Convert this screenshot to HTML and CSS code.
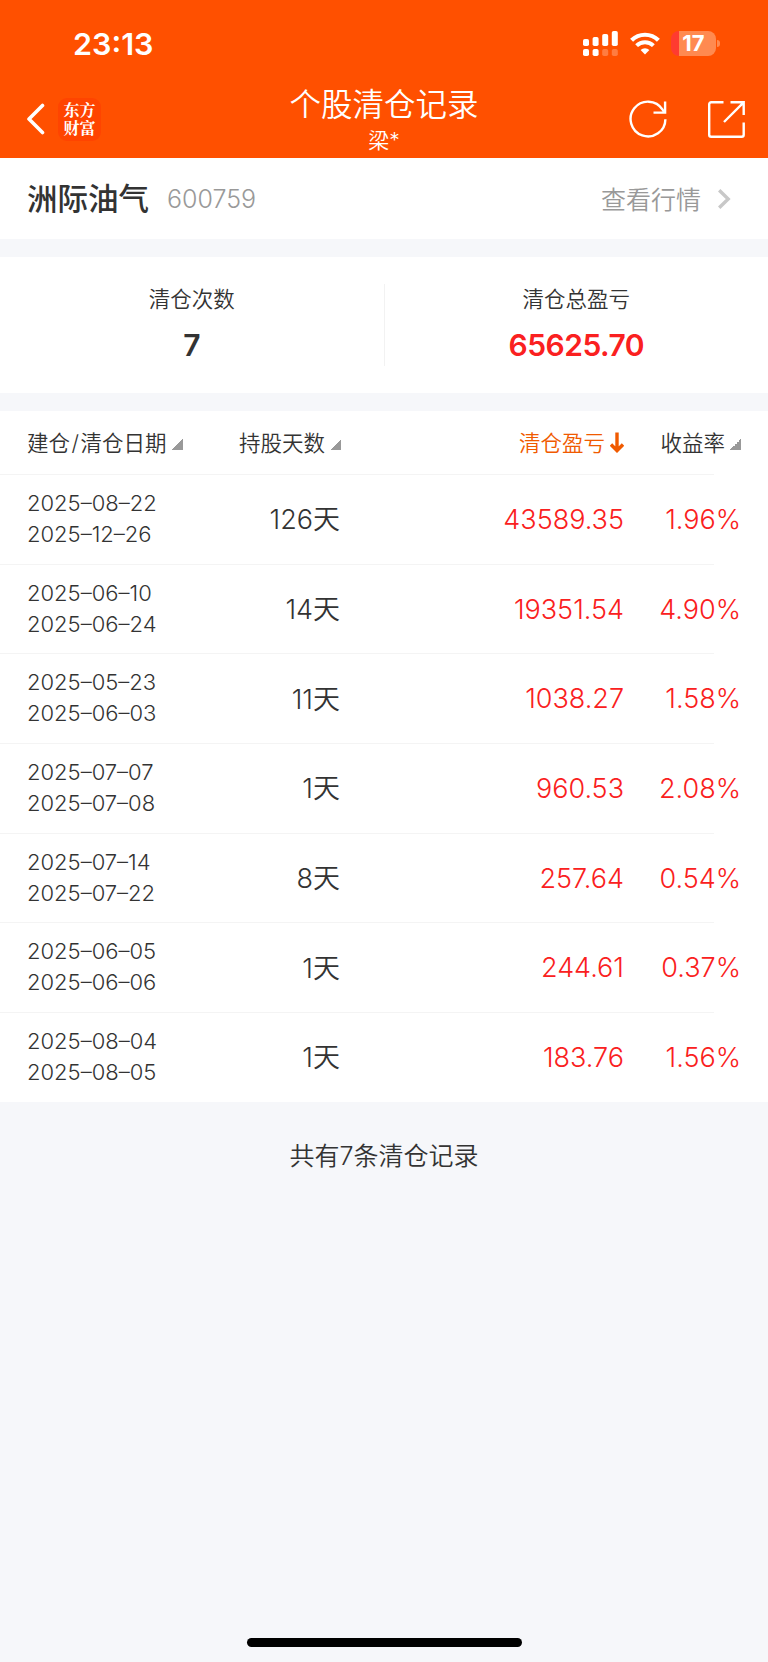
FILE: index.html
```html
<!DOCTYPE html>
<html lang="zh-CN">
<head>
    <meta charset="UTF-8">
    <meta name="viewport" content="width=device-width, initial-scale=1.0">
    <title>个股清仓记录</title>
    <link rel="stylesheet" href="styles.css">
</head>
<body>
    <header class="header">
        <div class="status-bar">
            <span class="time">23:13</span>
            <div class="status-icons">
                <svg class="signal" width="36" height="26" viewBox="0 0 36 26" fill="#fff">
                    <rect x="0" y="8" width="6" height="7" rx="1.8"/>
                    <rect x="9.6" y="6" width="6" height="9" rx="1.8"/>
                    <rect x="19.2" y="3" width="6" height="12" rx="1.8"/>
                    <rect x="28.8" y="0" width="6" height="15" rx="1.8"/>
                    <rect x="0" y="18" width="6" height="7" rx="1.8"/>
                    <rect x="9.6" y="18" width="6" height="7" rx="1.8"/>
                    <rect x="19.2" y="18" width="6" height="7" rx="1.8" opacity=".25"/>
                    <rect x="28.8" y="18" width="6" height="7" rx="1.8" opacity=".25"/>
                </svg>
                <svg class="wifi" width="30" height="23" viewBox="0 0 30 23" fill="none" stroke="#fff">
                    <path d="M1.6 8.3a19 19 0 0 1 26.8 0" stroke-width="4.2"/>
                    <path d="M6.6 13.6a12 12 0 0 1 16.8 0" stroke-width="4"/>
                    <path d="M15 22.4l-4.4-4.5a6.4 6.4 0 0 1 8.8 0z" fill="#fff" stroke="none"/>
                </svg>
                <div class="battery"><span>17</span></div>
            </div>
        </div>
        <div class="nav-bar">
            <div class="nav-left">
                <svg width="18" height="32" viewBox="0 0 18 32" fill="none" stroke="#fff" stroke-width="3.6" stroke-linecap="round" stroke-linejoin="round">
                    <path d="M15.5 2.5L2 16l13.5 13.5"/>
                </svg>
                <div class="logo">东方<br>财富</div>
            </div>
            <div class="nav-title">
                <h1>个股清仓记录</h1>
                <p>梁*</p>
            </div>
            <div class="nav-right">
                <svg width="38" height="38" viewBox="0 0 38 38" fill="none" stroke="#fff" stroke-width="2.4">
                    <path d="M36.4 19.2A17.4 17.4 0 1 1 33.6 9.6l2.2 3M24.5 12.6h11.6V1.5"/>
                </svg>
                <svg width="37" height="37" viewBox="0 0 37 37" fill="none" stroke="#fff" stroke-width="2.4">
                    <path d="M15.5 1.3H3.2a2 2 0 0 0-2 2v30.4a2 2 0 0 0 2 2h30.5a2 2 0 0 0 2-2V21.5M22.5 1.3h13.2V14M35.4 1.6L16 21"/>
                </svg>
            </div>
        </div>
    </header>

    <section class="stock">
        <h2>洲际油气</h2>
        <span class="code">600759</span>
        <a class="quote"><span>查看行情</span>
            <svg width="13" height="20" viewBox="0 0 13 20" fill="none" stroke="#c8c8c8" stroke-width="3.4">
                <path d="M1.2 1.2L10.2 10l-9 8.8"/>
            </svg>
        </a>
    </section>

    <section class="summary">
        <div class="summary-item">
            <p>清仓次数</p>
            <strong>7</strong>
        </div>
        <div class="summary-item">
            <p>清仓总盈亏</p>
            <strong class="red">65625.70</strong>
        </div>
    </section>

    <section class="records">
        <div class="row row-head">
            <div class="sort"><span>建仓<b>/</b>清仓日期</span><i></i></div>
            <div class="sort"><span>持股天数</span><i></i></div>
            <div class="sort active"><span>清仓盈亏</span>
                <svg width="14" height="21" viewBox="0 0 14 21" fill="none" stroke="#f05a00" stroke-width="3.4">
                    <path d="M7 .5v17.5M1 12.5l6 6 6-6"/>
                </svg>
            </div>
            <div class="sort"><span>收益率</span><i></i></div>
        </div>
        <div class="row">
            <div class="date">2025–08–22<br>2025–12–26</div>
            <div class="days">126天</div>
            <div class="num">43589.35</div>
            <div class="num">1.96%</div>
        </div>
        <div class="row">
            <div class="date">2025–06–10<br>2025–06–24</div>
            <div class="days">14天</div>
            <div class="num">19351.54</div>
            <div class="num">4.90%</div>
        </div>
        <div class="row">
            <div class="date">2025–05–23<br>2025–06–03</div>
            <div class="days">11天</div>
            <div class="num">1038.27</div>
            <div class="num">1.58%</div>
        </div>
        <div class="row">
            <div class="date">2025–07–07<br>2025–07–08</div>
            <div class="days">1天</div>
            <div class="num">960.53</div>
            <div class="num">2.08%</div>
        </div>
        <div class="row">
            <div class="date">2025–07–14<br>2025–07–22</div>
            <div class="days">8天</div>
            <div class="num">257.64</div>
            <div class="num">0.54%</div>
        </div>
        <div class="row">
            <div class="date">2025–06–05<br>2025–06–06</div>
            <div class="days">1天</div>
            <div class="num">244.61</div>
            <div class="num">0.37%</div>
        </div>
        <div class="row">
            <div class="date">2025–08–04<br>2025–08–05</div>
            <div class="days">1天</div>
            <div class="num">183.76</div>
            <div class="num">1.56%</div>
        </div>
    </section>

    <p class="total">共有7条清仓记录</p>
    <div class="home-bar"></div>
</body>
</html>
```
FILE: styles.css
```css
/* Global Styles */
* {
    box-sizing: border-box;
}

body {
    margin: 0;
    min-height: 1662px;
    display: flex;
    flex-direction: column;
    font-family: Inter, "Noto Sans CJK SC", sans-serif;
    font-weight: 350;
    color: #333;
    background: #f6f7fa;
}

h1, h2, p {
    margin: 0;
}

svg {
    display: block;
    flex: none;
}

/* Header */
.header {
    height: 158px;
    background: #ff5000;
    color: #fff;
}

.status-bar {
    height: 87px;
    padding: 0 49px 0 73px;
    display: flex;
    align-items: center;
    justify-content: space-between;
}

.time {
    font-size: 30.5px;
    font-weight: 600;
}

.status-icons {
    display: flex;
    align-items: center;
    gap: 11px;
}

.battery {
    position: relative;
    width: 45px;
    height: 25px;
    margin-right: 3px;
    border-radius: 8px;
    background: linear-gradient(90deg, #ff3b30 8px, #ff8a50 8px);
    font-size: 22px;
    font-weight: 700;
    line-height: 25px;
    text-align: center;
}

.battery::after {
    content: "";
    position: absolute;
    right: -4px;
    top: 9px;
    width: 3px;
    height: 7px;
    border-radius: 0 3px 3px 0;
    background: #ff8a50;
}

.nav-bar {
    height: 71px;
    display: grid;
    grid-template-columns: 1fr auto 1fr;
}

.nav-left {
    display: flex;
    align-items: center;
    gap: 13px;
    height: 64px;
    padding-left: 27px;
}

.logo {
    width: 43px;
    height: 43px;
    padding-top: 3px;
    border-radius: 9px;
    background: #ff4400;
    font-family: "Noto Serif CJK SC", "Noto Sans CJK SC", serif;
    font-size: 16px;
    font-weight: 700;
    line-height: 18px;
    text-align: center;
}

.nav-title {
    text-align: center;
}

.nav-title h1 {
    font-size: 31.5px;
    font-weight: 350;
    line-height: 35px;
}

.nav-title p {
    font-size: 21px;
    line-height: 38px;
}

.nav-right {
    display: flex;
    align-items: center;
    justify-content: flex-end;
    gap: 41px;
    height: 64px;
    padding-right: 23px;
}

/* Stock name */
.stock {
    height: 81px;
    padding: 0 37px 0 27px;
    display: flex;
    align-items: center;
    background: #fff;
}

.stock h2 {
    margin-top: -3px;
    font-size: 30.5px;
    font-weight: 500;
}

.code {
    margin-left: 18px;
    font-size: 25px;
    color: #999;
}

.quote {
    margin-left: auto;
    display: flex;
    align-items: center;
    gap: 17px;
    font-size: 25px;
    color: #999;
}

.quote span {
    margin-top: -2px;
}

/* Summary */
.summary {
    height: 136px;
    margin: 18px 0;
    padding: 27px 0;
    display: flex;
    background: #fff;
}

.summary-item {
    flex: 1;
    text-align: center;
}

.summary-item + .summary-item {
    border-left: 1px solid #f2f2f2;
}

.summary-item p {
    font-size: 21.5px;
    line-height: 30px;
}

.summary-item strong {
    display: block;
    font-size: 30px;
    font-weight: 600;
    letter-spacing: -0.5px;
    line-height: 36px;
    margin-top: 13px;
}

.summary-item .red {
    color: #fa2020;
}

/* Records */
.records {
    background: #fff;
}

.row {
    height: 89.7px;
    padding-left: 27px;
    display: grid;
    grid-template-columns: 163px 151px 283px 117px;
    align-items: center;
    background: linear-gradient(#f4f4f4, #f4f4f4) no-repeat 0 0 / 714px 1px;
}

.row-head {
    height: 63px;
    background: none;
}

.sort {
    display: flex;
    align-items: center;
    justify-content: flex-end;
    gap: 5px;
    font-size: 21.5px;
    white-space: nowrap;
}

.sort:first-child {
    justify-content: flex-start;
}

.sort span {
    margin-top: -3px;
}

.sort b {
    margin: 0 1.5px;
    font-weight: 350;
}

.sort i {
    width: 11px;
    height: 11px;
    margin-top: 4px;
    background: linear-gradient(135deg, transparent 50%, #999 50%);
}

.sort.active {
    color: #f05a00;
}

.sort.active svg {
    margin-top: -1px;
}

.date {
    font-size: 22px;
    line-height: 31px;
}

.days, .num {
    font-size: 27px;
    text-align: right;
}

.days {
    padding: 0 1px 2px 0;
}

.num {
    padding-top: 1px;
    color: #fa2020;
}

.total {
    margin-top: 36px;
    font-size: 25px;
    line-height: 36px;
    text-align: center;
}

.home-bar {
    width: 275px;
    height: 9px;
    margin: auto auto 15px;
    border-radius: 5px;
    background: #000;
}
```
